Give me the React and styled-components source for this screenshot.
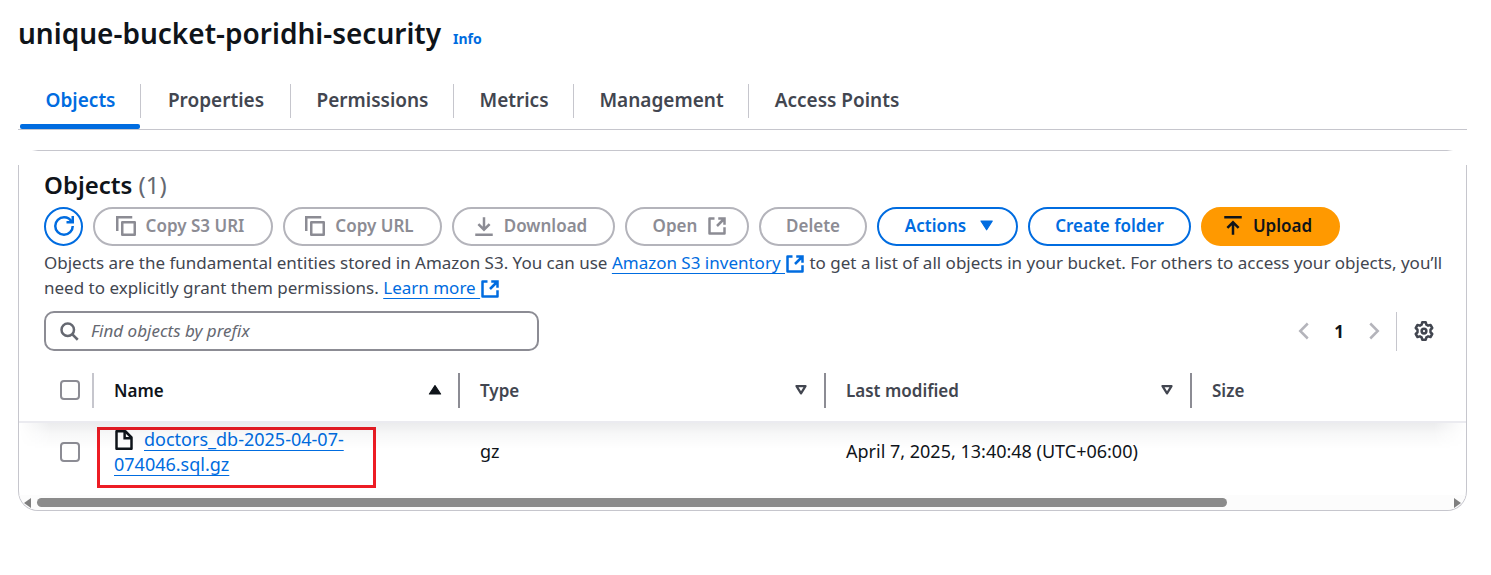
import React from "react";
import styled, { createGlobalStyle, css } from "styled-components";

const color = {
  text: "#0f141a",
  label: "#424650",
  muted: "#656871",
  disabled: "#8c8c94",
  disabledBorder: "#b4b4bb",
  line: "#c6c6cd",
  link: "#006ce0",
  accent: "#ff9900",
};

const GlobalStyle = createGlobalStyle`
  *, *::before, *::after { box-sizing: border-box; }
  body {
    margin: 0;
    background: #fff;
    color: ${color.text};
    font-family: "Noto Sans", "Open Sans", sans-serif;
    font-size: 17px;
    line-height: 25px;
  }
  button, input { font: inherit; }
`;

const Page = styled.main`
  padding: 13px 24px 24px 18px;
`;

const TitleRow = styled.header`
  display: flex;
  align-items: baseline;
  gap: 12px;
  height: 40px;
`;

const Title = styled.h1`
  margin: 0;
  font-size: 28px;
  line-height: 40px;
  font-weight: 600;
`;

const InfoLink = styled.a`
  color: ${color.link};
  font-size: 14px;
  font-weight: 700;
  text-decoration: none;
`;

const TabList = styled.nav`
  display: flex;
  margin-top: 31px;
  padding-left: 2px;
  border-bottom: 1px solid ${color.line};
`;

const TabItem = styled.div`
  display: flex;
  width: ${(p) => p.$width}px;
  padding-bottom: 11px;
  background: ${(p) =>
    p.$last ? "none" : `linear-gradient(${color.line}, ${color.line}) right top / 1px 34px no-repeat`};
`;

const Tab = styled.button`
  position: relative;
  flex: 1;
  height: 34px;
  padding: 0 0 2px;
  border: 0;
  background: none;
  color: ${(p) => (p.$active ? color.link : color.label)};
  font-size: 19px;
  font-weight: 600;
  white-space: nowrap;

  ${(p) =>
    p.$active &&
    css`
      &::after {
        content: "";
        position: absolute;
        left: 0;
        right: 1px;
        bottom: -11px;
        height: 5px;
        border-radius: 2px;
        background: ${color.link};
      }
    `}
`;

const PanelTop = styled.div`
  height: 1px;
  margin: 20px 14px 14px;
  background: linear-gradient(to right, transparent, ${color.line} 6px calc(100% - 6px), transparent);
`;

const Panel = styled.section`
  border: 1px solid ${color.line};
  border-top: 0;
  border-radius: 0 0 20px 20px;
  overflow: hidden;
`;

const PanelHead = styled.div`
  padding: 4px 20px 0 25px;
`;

const Heading = styled.h2`
  margin: 0;
  font-size: 24px;
  line-height: 32px;
  font-weight: 600;

  span {
    color: ${color.muted};
    font-weight: 400;
  }
`;

const Toolbar = styled.div`
  display: flex;
  flex-wrap: wrap;
  gap: 10px;
  margin-top: 6px;
`;

const variants = {
  normal: css`
    color: ${color.link};
    border-color: ${color.link};
  `,
  disabled: css`
    color: ${color.disabled};
    border-color: ${color.disabledBorder};
  `,
  primary: css`
    color: ${color.text};
    background: ${color.accent};
    border-color: ${color.accent};
  `,
};

const iconPadding = {
  start: "0 6px 1px 0",
  end: "0 0 1px 6px",
};

const Button = styled.button`
  display: flex;
  align-items: center;
  justify-content: center;
  gap: 10px;
  min-width: ${(p) => p.$width}px;
  height: 39px;
  padding: ${(p) => iconPadding[p.$icon] || "0 0 1px"};
  border: 2px solid;
  border-radius: 20px;
  background: #fff;
  font-weight: 600;
  line-height: 24px;
  white-space: nowrap;
  ${(p) => variants[p.$variant]}
`;

const Description = styled.p`
  margin: 4px 0 0;
  color: ${color.label};
`;

const Link = styled.a`
  color: ${color.link};
  text-decoration: underline 1px;
  text-underline-offset: 4px;
  text-decoration-skip-ink: none;
`;

const InlineIcon = styled.span`
  display: inline-block;
  height: 20px;
  color: ${color.link};
  vertical-align: -5px;
`;

const Filters = styled.div`
  display: flex;
  align-items: center;
  justify-content: space-between;
  margin-top: 11px;
`;

const SearchBox = styled.label`
  display: flex;
  align-items: center;
  gap: 12px;
  width: 495px;
  height: 40px;
  padding: 0 13px;
  border: 2px solid ${color.disabled};
  border-radius: 10px;
  color: ${color.muted};
`;

const SearchInput = styled.input`
  flex: 1;
  min-width: 0;
  padding: 0 0 2px;
  border: 0;
  outline: 0;
  background: none;
  color: ${color.text};

  &::placeholder {
    color: ${color.muted};
    font-style: italic;
    opacity: 1;
  }
`;

const Pager = styled.div`
  display: flex;
  align-items: center;
  height: 40px;
`;

const IconButton = styled.button`
  display: flex;
  padding: 0;
  border: 0;
  background: none;
  color: ${(p) => (p.disabled ? color.disabledBorder : color.label)};
`;

const PageNumber = styled.span`
  width: 50px;
  text-align: center;
  font-weight: 700;
`;

const PreferenceSlot = styled.div`
  display: flex;
  align-items: center;
  height: 39px;
  margin-left: 12px;
  padding: 0 12px 0 17px;
  border-left: 1px solid ${color.line};
`;

const TableArea = styled.div`
  position: relative;
  margin-top: 10px;

  &::after {
    content: "";
    position: absolute;
    top: 62px;
    left: 0;
    right: 0;
    height: 26px;
    background: linear-gradient(rgba(0, 7, 22, 0.08), rgba(0, 7, 22, 0.03) 40%, rgba(0, 7, 22, 0));
    mask-image: linear-gradient(to right, transparent, #000 32px calc(100% - 32px), transparent);
    pointer-events: none;
  }
`;

const TableScroll = styled.div`
  overflow-x: auto;
  scrollbar-width: none;
`;

const Table = styled.table`
  width: 100%;
  min-width: 1716px;
  table-layout: fixed;
  border-collapse: separate;
  border-spacing: 0;
  text-align: left;
`;

const HeadCell = styled.th`
  height: 62px;
  padding: 0 16px 2px 20px;
  border-bottom: 2px solid #ebebf0;
  background: ${(p) =>
    p.$divider ? `linear-gradient(${p.$divider}, ${p.$divider}) right 12px / 2px 35px no-repeat` : "none"};
  color: ${(p) => (p.$sorted ? color.text : color.label)};
  font-weight: 600;
`;

const HeadContent = styled.div`
  display: flex;
  align-items: center;
  justify-content: space-between;
`;

const Cell = styled.td`
  position: relative;
  height: 72px;
  padding: ${(p) => (p.$top ? "4px 21px 14px 20px" : "0 20px 16px")};
  font-size: 18px;
  vertical-align: ${(p) => (p.$top ? "top" : "middle")};
`;

const CheckCell = styled(Cell)`
  padding: 0 0 14px 41px;
`;

const CheckHead = styled(HeadCell)`
  padding: 0 0 2px 41px;
`;

const Checkbox = styled.input.attrs({ type: "checkbox" })`
  display: block;
  appearance: none;
  width: 20px;
  height: 20px;
  margin: 0;
  border: 2px solid ${color.disabled};
  border-radius: 4px;
  background: #fff;
`;

const FileIconSlot = styled.span`
  display: inline-block;
  width: 30px;
  height: 20px;
  vertical-align: -4px;
`;

const Highlight = styled.span`
  position: absolute;
  top: 4px;
  left: 3px;
  width: 279px;
  height: 61px;
  border: 3px solid #ed1c24;
  pointer-events: none;
`;

const ScrollBar = styled.div`
  display: flex;
  align-items: center;
  gap: 6px;
  height: 15px;
  padding: 0 4px;
  background: #fcfcfc;
`;

const ScrollTrack = styled.div`
  flex: 1;
`;

const ScrollThumb = styled.div`
  width: calc(100% * 1447 / 1716);
  height: 9px;
  border-radius: 5px;
  background: #8b8b8b;
`;

const Svg = ({ size = 20, children, ...rest }) => (
  <svg
    width={size}
    height={size}
    viewBox="0 0 16 16"
    fill="none"
    stroke="currentColor"
    strokeWidth="2"
    aria-hidden="true"
    {...rest}
  >
    {children}
  </svg>
);

const RefreshIcon = () => (
  <Svg>
    <path d="M15 8c0 3.87-3.13 7-7 7s-7-3.13-7-7 3.13-7 7-7c2.79 0 5.2 1.63 6.33 4" />
    <path d="M10 5h5V0" />
  </Svg>
);
const CopyIcon = () => (
  <Svg>
    <path d="M1 12V1h12" />
    <path d="M5 5h10v10H5z" strokeLinejoin="round" />
  </Svg>
);
const DownloadIcon = () => (
  <Svg>
    <path d="M1 15h14M8 1v10M3.500 6.500 8 11l4.500-4.500" />
  </Svg>
);
const UploadIcon = () => (
  <Svg>
    <path d="M1 1h14M8 15V5M3.500 9.500 8 5l4.500 4.500" />
  </Svg>
);
const ExternalIcon = () => (
  <Svg>
    <path d="M14 9v5H2V2h4" strokeLinejoin="round" />
    <path d="M9 2h5v5M14 2 8 8" />
  </Svg>
);
const CaretIcon = () => (
  <Svg size={20}>
    <path d="M4 4h9l-4.500 7z" fill="currentColor" strokeWidth="1" strokeLinejoin="round" />
  </Svg>
);
const SearchIcon = () => (
  <Svg>
    <circle cx="7" cy="7" r="5" />
    <path d="m10.500 10.500 4.500 4.500" />
  </Svg>
);
const GearIcon = () => (
  <Svg strokeLinejoin="round">
    <path d="M6.600 1h2.800l.5 1.900 1.400.8 1.900-.5 1.400 2.400L13.200 7v2l1.400 1.400-1.400 2.400-1.900-.5-1.400.8-.5 1.900H6.600l-.5-1.900-1.400-.8-1.900.5-1.400-2.400L2.800 9V7L1.400 5.600l1.400-2.400 1.900.5 1.400-.8z" />
    <circle cx="8" cy="8" r="1.900" />
  </Svg>
);
const FileIcon = () => (
  <Svg>
    <path d="M2 1h7l5 5v9H2z" strokeLinejoin="round" />
    <path d="M8.500 1v5.500H14" />
  </Svg>
);
const ChevronIcon = ({ d }) => (
  <Svg>
    <path d={d} />
  </Svg>
);
const SortIcon = ({ up }) => (
  <Svg size={18}>
    {up ? (
      <path d="M3 11.500h10L8 4z" fill="currentColor" strokeWidth="1" strokeLinejoin="round" />
    ) : (
      <path d="M4 4.500h8L8 11z" strokeLinejoin="round" />
    )}
  </Svg>
);
const ArrowIcon = ({ d }) => (
  <svg width="8" height="10" viewBox="0 0 8 10" fill="#7f7f7f" aria-hidden="true">
    <path d={d} />
  </svg>
);

const tabs = [
  ["Objects", 121],
  ["Properties", 150],
  ["Permissions", 163],
  ["Metrics", 120],
  ["Management", 175],
  ["Access Points", 176],
];

export default function App() {
  return (
    <>
      <GlobalStyle />
      <Page>
        <TitleRow>
          <Title>unique-bucket-poridhi-security</Title>
          <InfoLink href="#info">Info</InfoLink>
        </TitleRow>

        <TabList aria-label="Bucket sections">
          {tabs.map(([name, width], i) => (
            <TabItem key={name} $width={width} $last={i === tabs.length - 1}>
              <Tab type="button" $active={i === 0}>
                {name}
              </Tab>
            </TabItem>
          ))}
        </TabList>

        <PanelTop />
        <Panel>
          <PanelHead>
            <Heading>
              Objects <span>(1)</span>
            </Heading>
            <Toolbar>
              <Button type="button" $variant="normal" $width={39} aria-label="Refresh">
                <RefreshIcon />
              </Button>
              <Button type="button" disabled $variant="disabled" $icon="start" $width={180}>
                <CopyIcon />
                Copy S3 URI
              </Button>
              <Button type="button" disabled $variant="disabled" $icon="start" $width={159}>
                <CopyIcon />
                Copy URL
              </Button>
              <Button type="button" disabled $variant="disabled" $icon="start" $width={163}>
                <DownloadIcon />
                Download
              </Button>
              <Button type="button" disabled $variant="disabled" $icon="end" $width={124}>
                Open
                <ExternalIcon />
              </Button>
              <Button type="button" disabled $variant="disabled" $width={108}>
                Delete
              </Button>
              <Button type="button" $variant="normal" $icon="end" $width={141}>
                Actions
                <CaretIcon />
              </Button>
              <Button type="button" $variant="normal" $width={163}>
                Create folder
              </Button>
              <Button type="button" $variant="primary" $icon="start" $width={139}>
                <UploadIcon />
                Upload
              </Button>
            </Toolbar>
            <Description>
              Objects are the fundamental entities stored in Amazon S3. You can use{" "}
              <Link href="#inventory">Amazon S3 inventory&nbsp;</Link>
              <InlineIcon>
                <ExternalIcon />
              </InlineIcon>{" "}
              to get a list of all objects in your bucket. For others to access your objects, you’ll need to
              explicitly grant them permissions. <Link href="#learn">Learn more&nbsp;</Link>
              <InlineIcon>
                <ExternalIcon />
              </InlineIcon>
            </Description>
            <Filters>
              <SearchBox>
                <SearchIcon />
                <SearchInput type="text" aria-label="Find objects by prefix" placeholder="Find objects by prefix" />
              </SearchBox>
              <Pager>
                <IconButton type="button" disabled aria-label="Previous page">
                  <ChevronIcon d="M11 2 5 8l6 6" />
                </IconButton>
                <PageNumber>1</PageNumber>
                <IconButton type="button" disabled aria-label="Next page">
                  <ChevronIcon d="m5 2 6 6-6 6" />
                </IconButton>
                <PreferenceSlot>
                  <IconButton type="button" aria-label="Preferences">
                    <GearIcon />
                  </IconButton>
                </PreferenceSlot>
              </Pager>
            </Filters>
          </PanelHead>

          <TableArea>
            <TableScroll>
              <Table>
                <colgroup>
                  <col style={{ width: 75 }} />
                  <col style={{ width: 366 }} />
                  <col style={{ width: 366 }} />
                  <col style={{ width: 366 }} />
                  <col />
                </colgroup>
                <thead>
                  <tr>
                    <CheckHead $divider={color.line}>
                      <Checkbox aria-label="Select all objects" />
                    </CheckHead>
                    <HeadCell $divider={color.disabled} $sorted>
                      <HeadContent>
                        Name <SortIcon up />
                      </HeadContent>
                    </HeadCell>
                    <HeadCell $divider={color.disabled}>
                      <HeadContent>
                        Type <SortIcon />
                      </HeadContent>
                    </HeadCell>
                    <HeadCell $divider={color.disabled}>
                      <HeadContent>
                        Last modified <SortIcon />
                      </HeadContent>
                    </HeadCell>
                    <HeadCell>Size</HeadCell>
                  </tr>
                </thead>
                <tbody>
                  <tr>
                    <CheckCell>
                      <Checkbox aria-label="Select doctors_db-2025-04-07-074046.sql.gz" />
                    </CheckCell>
                    <Cell $top>
                      <FileIconSlot>
                        <FileIcon />
                      </FileIconSlot>
                      <Link href="#object">doctors_db-2025-04-07-074046.sql.gz</Link>
                      <Highlight />
                    </Cell>
                    <Cell>gz</Cell>
                    <Cell>April 7, 2025, 13:40:48 (UTC+06:00)</Cell>
                    <Cell />
                  </tr>
                </tbody>
              </Table>
            </TableScroll>
          </TableArea>
          <ScrollBar>
            <ArrowIcon d="M8 0v10L1 5z" />
            <ScrollTrack>
              <ScrollThumb />
            </ScrollTrack>
            <ArrowIcon d="M0 0v10l7-5z" />
          </ScrollBar>
        </Panel>
      </Page>
    </>
  );
}
